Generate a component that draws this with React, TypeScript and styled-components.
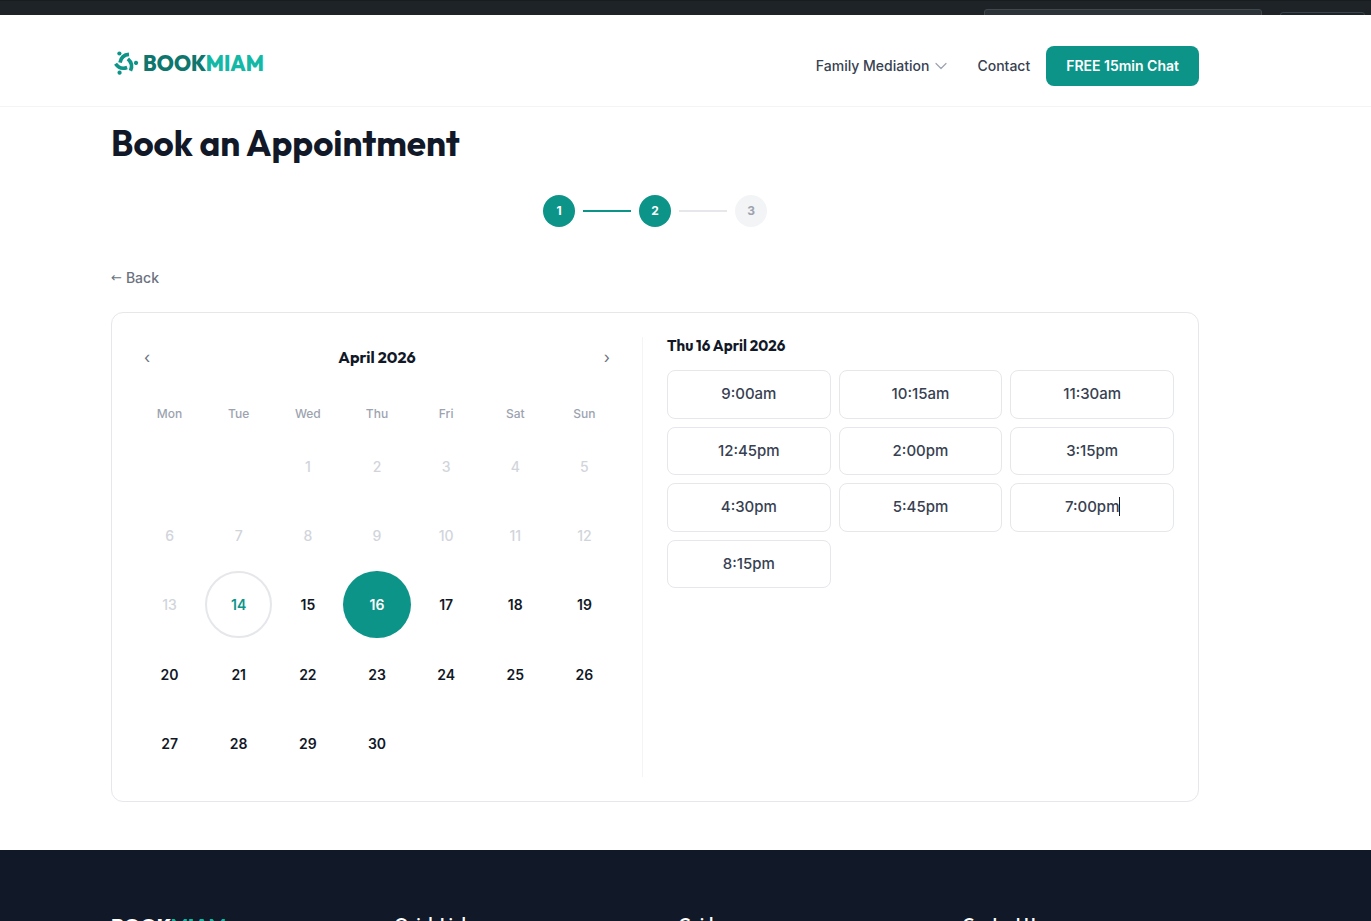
import React from "react";
import styled, { createGlobalStyle, css } from "styled-components";

const teal = "#0d9488";
const ink = "#111827";
const headingFont = `Outfit, Lato, "Open Sans", sans-serif`;

const GlobalStyle = createGlobalStyle`
  *, *::before, *::after { box-sizing: border-box; }
  body { margin: 0; background: #fff; color: ${ink}; font-family: Inter, "Liberation Sans", sans-serif; }
  button { font-family: inherit; cursor: pointer; }
  h1, h2, h3, p { margin: 0; }
`;

const Page = styled.div`
  display: flex;
  flex-direction: column;
  height: 100vh;
  overflow: hidden;
`;

const AdminBar = styled.div`
  display: flex;
  flex: none;
  justify-content: flex-end;
  gap: 18px;
  height: 15px;
  padding-right: 6px;
  overflow: hidden;
  background: #1d2327;
  border-top: 1px solid #171c1f;
`;

const AdminField = styled.div<{ $wide?: boolean }>`
  width: ${(p) => (p.$wide ? 278 : 85)}px;
  height: 30px;
  margin-top: ${(p) => (p.$wide ? 8 : 11)}px;
  border: 1px solid ${(p) => (p.$wide ? "#41484d" : "#36444e")};
  border-radius: 3px;
  background: ${(p) => (p.$wide ? "#2c3338" : "transparent")};
`;

const Container = styled.div`
  padding: 0 172px 0 111px;
`;

const Header = styled.header`
  flex: none;
  border-bottom: 1px solid #f3f4f6;
`;

const HeaderInner = styled(Container)`
  display: flex;
  align-items: center;
  justify-content: space-between;
  height: 91px;
  padding-top: 10px;
`;

const Brand = styled.a`
  display: flex;
  align-items: center;
  gap: 4px;
  margin-bottom: 6px;
  color: #0f766e;
  font: 800 21px/28px ${headingFont};
  text-decoration: none;
`;

const BrandAccent = styled.span`
  color: #14b8a6;
`;

const Nav = styled.nav`
  display: flex;
  align-items: center;
`;

const navText = css`
  color: #374151;
  font-size: 14px;
  font-weight: 500;
  line-height: 20px;
`;

const NavButton = styled.button`
  ${navText}
  display: flex;
  align-items: center;
  gap: 6px;
  margin-right: 30px;
  padding: 0;
  border: 0;
  background: none;
`;

const NavLink = styled.a`
  ${navText}
  margin-right: 16px;
  text-decoration: none;
`;

const ChatButton = styled.a`
  padding: 10px 20px;
  border-radius: 8px;
  background: ${teal};
  color: #fff;
  font-size: 14px;
  font-weight: 600;
  line-height: 20px;
  text-decoration: none;
`;

const Main = styled.main`
  flex: none;
`;

const Title = styled.h1`
  margin-top: 16px;
  font: 700 35px/40px ${headingFont};
`;

const Steps = styled.ol`
  display: flex;
  align-items: center;
  justify-content: center;
  gap: 8px;
  margin: 32px 0 40px;
  padding: 0;
  list-style: none;
`;

const Step = styled.li<{ $active?: boolean }>`
  width: 32px;
  border-radius: 50%;
  background: ${(p) => (p.$active ? teal : "#f3f4f6")};
  color: ${(p) => (p.$active ? "#fff" : "#9ca3af")};
  font-size: 12px;
  font-weight: 700;
  line-height: 32px;
  text-align: center;
`;

const StepLine = styled.li<{ $active?: boolean }>`
  width: 48px;
  height: 2px;
  background: ${(p) => (p.$active ? teal : "#e5e7eb")};
`;

const BackButton = styled.button`
  display: flex;
  align-items: center;
  gap: 4px;
  margin-bottom: 24px;
  padding: 0;
  border: 0;
  background: none;
  color: #6b7280;
  font-size: 14px;
  font-weight: 500;
  line-height: 21px;
`;

const BackArrow = styled.span`
  font-family: "DejaVu Sans", sans-serif;
  font-size: 13px;
  font-weight: 400;
`;

const Card = styled.section`
  display: grid;
  grid-template-columns: 1fr 1fr;
  gap: 24px;
  margin-bottom: 48px;
  padding: 24px;
  border: 1px solid #e5e7eb;
  border-radius: 12px;
`;

const Calendar = styled.div`
  padding-right: 24px;
  border-right: 1px solid #f3f4f6;
`;

const MonthBar = styled.div`
  display: flex;
  align-items: center;
  justify-content: space-between;
  height: 40px;
  margin-bottom: 24px;
`;

const MonthName = styled.h2`
  font: 700 16px/24px ${headingFont};
`;

const MonthButton = styled.button`
  padding: 8px;
  border: 0;
  background: none;
  color: #6b7280;
  font-size: 16px;
  line-height: 24px;
`;

const Month = styled.table`
  width: calc(100% + 2px);
  margin: 0 -1px -1px;
  border-collapse: collapse;
  table-layout: fixed;
`;

const Weekday = styled.th`
  height: 31px;
  padding: 3px 0 0;
  color: #9ca3af;
  font-size: 12px;
  font-weight: 500;
  line-height: 20px;
  vertical-align: top;
`;

const DayCell = styled.td`
  padding: 1px;
`;

type DayState = "past" | "today" | "open" | "selected";

const dayLook: Record<DayState, string> = {
  past: "color: #d1d5db; font-weight: 500;",
  today: `color: ${teal}; border: 2px solid #e5e7eb;`,
  open: `color: ${ink};`,
  selected: `color: #fff; background: ${teal};`,
};

const Day = styled.button<{ $state: DayState }>`
  display: block;
  width: 100%;
  aspect-ratio: 1;
  padding: 0;
  border: 0;
  border-radius: 50%;
  background: none;
  font-size: 14px;
  font-weight: 600;
  ${(p) => dayLook[p.$state]}
`;

const SlotsHeading = styled.h3`
  margin-bottom: 16px;
  font: 700 15px/17px ${headingFont};
`;

const Slots = styled.div`
  display: grid;
  grid-template-columns: repeat(3, 1fr);
  gap: 8px;
`;

const Slot = styled.button`
  padding: 12px 0;
  border: 1px solid #e5e7eb;
  border-radius: 8px;
  background: #fff;
  color: #374151;
  font-size: 15px;
  font-weight: 500;
  line-height: 1.5;
`;

const SlotLabel = styled.span<{ $caret?: boolean }>`
  position: relative;
  ${(p) =>
    p.$caret &&
    css`
      &::after {
        content: "";
        position: absolute;
        top: 0;
        left: 100%;
        width: 1px;
        height: 19px;
        background: ${ink};
      }
    `}
`;

const Footer = styled.footer`
  flex: 1 0 auto;
  background: ${ink};
  color: #fff;
`;

const FooterInner = styled(Container)`
  display: grid;
  grid-template-columns: repeat(4, 1fr);
  gap: 48px;
  padding-top: 64px;
`;

const FooterBrand = styled.p`
  font: 800 20px/24px ${headingFont};
`;

const FooterHeading = styled.h3`
  font: 600 16px/18px ${headingFont};
`;

const slots = ["9:00am", "10:15am", "11:30am", "12:45pm", "2:00pm", "3:15pm", "4:30pm", "5:45pm", "7:00pm", "8:15pm"];
const weekdays = ["Mon", "Tue", "Wed", "Thu", "Fri", "Sat", "Sun"];
const weeks = Array.from({ length: 5 }, (_, w) => Array.from({ length: 7 }, (_, d) => w * 7 + d - 1));

const stateOf = (day: number): DayState =>
  day < 14 ? "past" : day === 14 ? "today" : day === 16 ? "selected" : "open";

const LogoMark = () => (
  <svg width="28" height="28" viewBox="-14 -14 28 28" fill="none" aria-hidden="true">
    {[0, 120, 240].map((angle) => (
      <g key={angle} transform={`rotate(${angle})`}>
        <circle cx="-5.6" cy="-9.5" r="2.1" fill={teal} />
        <path d="M4 -8.600C-1 -8.200 -4 -5.600 -5 -.4" stroke="#0f9488" strokeWidth="3.600" />
      </g>
    ))}
  </svg>
);

export default function App() {
  return (
    <>
      <GlobalStyle />
      <Page>
        <AdminBar>
          <AdminField $wide />
          <AdminField />
        </AdminBar>
        <Header>
          <HeaderInner>
            <Brand href="#">
              <LogoMark />
              <span>
                BOOK<BrandAccent>MIAM</BrandAccent>
              </span>
            </Brand>
            <Nav>
              <NavButton type="button">
                Family Mediation
                <svg width="12" height="12" viewBox="0 0 12 12" fill="none" stroke="#9ca3af" strokeWidth="1.2" strokeLinecap="round" strokeLinejoin="round">
                  <path d="M1 3.500l5 5 5-5" />
                </svg>
              </NavButton>
              <NavLink href="#">Contact</NavLink>
              <ChatButton href="#">FREE 15min Chat</ChatButton>
            </Nav>
          </HeaderInner>
        </Header>
        <Main>
          <Container>
            <Title>Book an Appointment</Title>
            <Steps>
              <Step $active>1</Step>
              <StepLine $active aria-hidden="true" />
              <Step $active>2</Step>
              <StepLine aria-hidden="true" />
              <Step>3</Step>
            </Steps>
            <BackButton type="button">
              <BackArrow>←</BackArrow>
              <span>Back</span>
            </BackButton>
            <Card>
              <Calendar>
                <MonthBar>
                  <MonthButton type="button" aria-label="Previous month">‹</MonthButton>
                  <MonthName>April 2026</MonthName>
                  <MonthButton type="button" aria-label="Next month">›</MonthButton>
                </MonthBar>
                <Month>
                  <thead>
                    <tr>
                      {weekdays.map((name) => (
                        <Weekday key={name} scope="col">{name}</Weekday>
                      ))}
                    </tr>
                  </thead>
                  <tbody>
                    {weeks.map((week, i) => (
                      <tr key={i}>
                        {week.map((day) => (
                          <DayCell key={day}>
                            {day > 0 && day <= 30 && (
                              <Day type="button" $state={stateOf(day)} disabled={day < 14}>{day}</Day>
                            )}
                          </DayCell>
                        ))}
                      </tr>
                    ))}
                  </tbody>
                </Month>
              </Calendar>
              <div>
                <SlotsHeading>Thu 16 April 2026</SlotsHeading>
                <Slots>
                  {slots.map((time) => (
                    <Slot key={time} type="button">
                      <SlotLabel $caret={time === "7:00pm"}>{time}</SlotLabel>
                    </Slot>
                  ))}
                </Slots>
              </div>
            </Card>
          </Container>
        </Main>
        <Footer>
          <FooterInner>
            <FooterBrand>
              BOOK<BrandAccent>MIAM</BrandAccent>
            </FooterBrand>
            <FooterHeading>Quick Links</FooterHeading>
            <FooterHeading>Guides</FooterHeading>
            <FooterHeading>Contact Us</FooterHeading>
          </FooterInner>
        </Footer>
      </Page>
    </>
  );
}
